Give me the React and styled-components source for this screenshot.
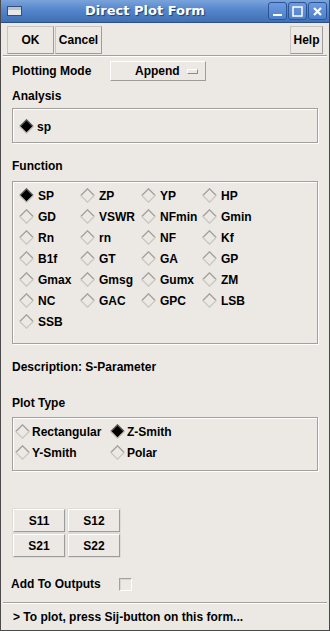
import React from 'react'
import styled, {createGlobalStyle} from 'styled-components'

const GlobalStyle = createGlobalStyle`
  html, body {
    margin: 0;
    padding: 0;
    background: #ece9e4;
  }
  body {
    font-family: "Liberation Sans", Arial, sans-serif;
    font-weight: bold;
    font-size: 12px;
    color: #000;
  }
`

const Window = styled.div`
  width: 330px;
  height: 631px;
  box-sizing: border-box;
  display: flex;
  flex-direction: column;
  background: #ece9e4;
  border: 1px solid #4a4a4a;
  border-top: none;
  overflow: hidden;
`

const TitleBar = styled.div`
  height: 23px;
  margin: 0 -1px;
  box-sizing: border-box;
  display: flex;
  align-items: center;
  padding: 0 3px 0 7px;
  background: linear-gradient(#7aa3da, #5586cb 45%, #3f70b6);
  border-bottom: 1px solid #2b4f86;
`

const TitleText = styled.div`
  flex: 1;
  text-align: center;
  color: #fff;
  font-family: "DejaVu Sans", sans-serif;
  font-size: 13px;
  font-weight: bold;
  text-shadow: 1px 1px 1px #1d3d6e;
  padding-bottom: 1px;
`

const WinButtons = styled.div`
  display: flex;
  gap: 1px;
`

const WinButton = styled.div`
  width: 19px;
  height: 18px;
  box-sizing: border-box;
  border: 1px solid #2d5594;
  border-radius: 3px;
  background: linear-gradient(#6f9be0, #4c7fcc);
  display: flex;
  align-items: center;
  justify-content: center;
`

const Toolbar = styled.div`
  height: 32px;
  box-sizing: border-box;
  display: flex;
  padding: 3px 6px 0 6px;
  gap: 1px;
`

const ToolButton = styled.div`
  width: ${p => p.$w}px;
  height: 28px;
  box-sizing: border-box;
  display: flex;
  align-items: center;
  justify-content: center;
  border: 1px solid;
  border-color: #c8c6c2 #9e9c98 #9e9c98 #c8c6c2;
  margin-left: ${p => (p.$push ? 'auto' : '0')};
`

const Separator = styled.div`
  height: 0;
  border-top: 1px solid #a4a29e;
  border-bottom: 1px solid #fff;
  margin: 0 2px;
`

const Content = styled.div`
  display: flex;
  flex-direction: column;
  padding: 0 11px 0 11px;
  flex: 1;
`

const ModeRow = styled.div`
  display: flex;
  align-items: center;
  height: 20px;
  margin-top: 4px;
`

const ModeLabel = styled.div`
  width: 98px;
`

const OptionMenu = styled.div`
  width: 96px;
  height: 20px;
  box-sizing: border-box;
  border: 1px solid;
  border-color: #fff #9e9c98 #9e9c98 #fff;
  display: flex;
  align-items: center;
  padding-left: 24px;
`

const OptionIndicator = styled.div`
  width: 9px;
  height: 3px;
  margin-left: auto;
  margin-right: 7px;
  border: 1px solid;
  border-color: #fff #8e8c88 #8e8c88 #fff;
`

const Label = styled.div`
  height: 14px;
  line-height: 14px;
  margin-top: ${p => p.$top}px;
`

const Frame = styled.div`
  margin-top: ${p => p.$top}px;
  height: ${p => p.$h}px;
  box-sizing: border-box;
  border: 1px solid #a2a09c;
  box-shadow: inset 1px 1px 0 #fff, 1px 1px 0 #fff;
  padding: ${p => p.$pad};
`

const RadioGrid = styled.div`
  display: grid;
  grid-template-columns: repeat(${p => p.$cols}, ${p => p.$colw}px);
  grid-auto-rows: ${p => p.$rowh}px;
`

const RadioItem = styled.div`
  display: flex;
  align-items: center;
  gap: ${p => p.$gap || 4}px;
  white-space: nowrap;
`

const SGrid = styled.div`
  margin-top: 38px;
  display: grid;
  grid-template-columns: repeat(2, 52px);
  grid-auto-rows: 23px;
  column-gap: 3px;
  row-gap: 2px;
  margin-left: 1px;
`

const SButton = styled.div`
  box-sizing: border-box;
  border: 1px solid;
  border-color: #fff #9e9c98 #9e9c98 #fff;
  box-shadow: 0 0 0 0.5px #cfccc7;
  display: flex;
  align-items: center;
  justify-content: center;
`

const OutputsRow = styled.div`
  display: flex;
  align-items: center;
  height: 14px;
  margin-top: 20px;
  margin-left: -1px;
`

const CheckBox = styled.div`
  width: 13px;
  height: 13px;
  box-sizing: border-box;
  margin-left: 18px;
  border: 1px solid;
  border-color: #a4a29e #fff #fff #a4a29e;
  box-shadow: inset 1px 1px 0 #d8d6d2;
`

const Footer = styled.div`
  margin-top: auto;
`

const StatusText = styled.div`
  height: 26px;
  line-height: 26px;
  padding-left: 12px;
`

function Diamond({checked}) {
  return (
    <svg width="15" height="15" viewBox="0 0 15 15" style={{flex: 'none'}}>
      {checked && <polygon points="7.5,1 14,7.5 7.5,14 1,7.5" fill="#000" />}
      <polyline points="0.8,7.5 7.5,0.8 14.2,7.5" fill="none" stroke={checked ? '#5a5a5a' : '#a19f9b'} strokeWidth="1.3" />
      <polyline points="0.8,7.5 7.5,14.2 14.2,7.5" fill="none" stroke={checked ? '#bdbbb7' : '#c9c7c3'} strokeWidth="1.3" />
    </svg>
  )
}

function Radio({label, checked, gap}) {
  return (
    <RadioItem $gap={gap}>
      <Diamond checked={checked} />
      <span>{label}</span>
    </RadioItem>
  )
}

const functions = [
  'SP', 'ZP', 'YP', 'HP',
  'GD', 'VSWR', 'NFmin', 'Gmin',
  'Rn', 'rn', 'NF', 'Kf',
  'B1f', 'GT', 'GA', 'GP',
  'Gmax', 'Gmsg', 'Gumx', 'ZM',
  'NC', 'GAC', 'GPC', 'LSB',
  'SSB',
]

export default function App() {
  return (
    <Window>
      <GlobalStyle />
      <TitleBar>
        <svg width="15" height="10" viewBox="0 0 15 10">
          <rect x="0.5" y="0.5" width="14" height="9" fill="#e8e8e8" stroke="#3a4f6e" />
          <rect x="1" y="1" width="13" height="3" fill="#b5c3d6" />
        </svg>
        <TitleText>Direct Plot Form</TitleText>
        <WinButtons>
          <WinButton>
            <svg width="11" height="11" viewBox="0 0 11 11">
              <rect x="1" y="8" width="9" height="2" fill="#fff" />
            </svg>
          </WinButton>
          <WinButton>
            <svg width="11" height="11" viewBox="0 0 11 11">
              <rect x="1" y="1" width="9" height="9" fill="none" stroke="#fff" strokeWidth="1.5" />
            </svg>
          </WinButton>
          <WinButton>
            <svg width="11" height="11" viewBox="0 0 11 11">
              <path d="M2 2 L9 9 M9 2 L2 9" stroke="#fff" strokeWidth="2.2" />
            </svg>
          </WinButton>
        </WinButtons>
      </TitleBar>

      <Toolbar>
        <ToolButton $w={47}>OK</ToolButton>
        <ToolButton $w={47}>Cancel</ToolButton>
        <ToolButton $w={33} $push>Help</ToolButton>
      </Toolbar>
      <Separator />

      <Content>
        <ModeRow>
          <ModeLabel>Plotting Mode</ModeLabel>
          <OptionMenu>
            Append
            <OptionIndicator />
          </OptionMenu>
        </ModeRow>

        <Label $top={8}>Analysis</Label>
        <Frame $top={5} $h={35} $pad="10px 5px 0 6px">
          <Radio label="sp" checked gap={3} />
        </Frame>

        <Label $top={16}>Function</Label>
        <Frame $top={8} $h={163} $pad="3px 5px 0 6px">
          <RadioGrid $cols={4} $colw={61} $rowh={21}>
            {functions.map((f, i) => (
              <Radio key={f} label={f} checked={i === 0} />
            ))}
          </RadioGrid>
        </Frame>

        <Label $top={16}>Description: S-Parameter</Label>

        <Label $top={22}>Plot Type</Label>
        <Frame $top={7} $h={54} $pad="3px 2px 0 2px">
          <RadioGrid $cols={2} $colw={95} $rowh={21}>
            <Radio label="Rectangular" gap={2} />
            <Radio label="Z-Smith" checked gap={2} />
            <Radio label="Y-Smith" gap={2} />
            <Radio label="Polar" gap={2} />
          </RadioGrid>
        </Frame>

        <SGrid>
          <SButton>S11</SButton>
          <SButton>S12</SButton>
          <SButton>S21</SButton>
          <SButton>S22</SButton>
        </SGrid>

        <OutputsRow>
          Add To Outputs
          <CheckBox />
        </OutputsRow>
      </Content>

      <Footer>
        <Separator />
        <StatusText>&gt; To plot, press Sij-button on this form...</StatusText>
      </Footer>
    </Window>
  )
}
